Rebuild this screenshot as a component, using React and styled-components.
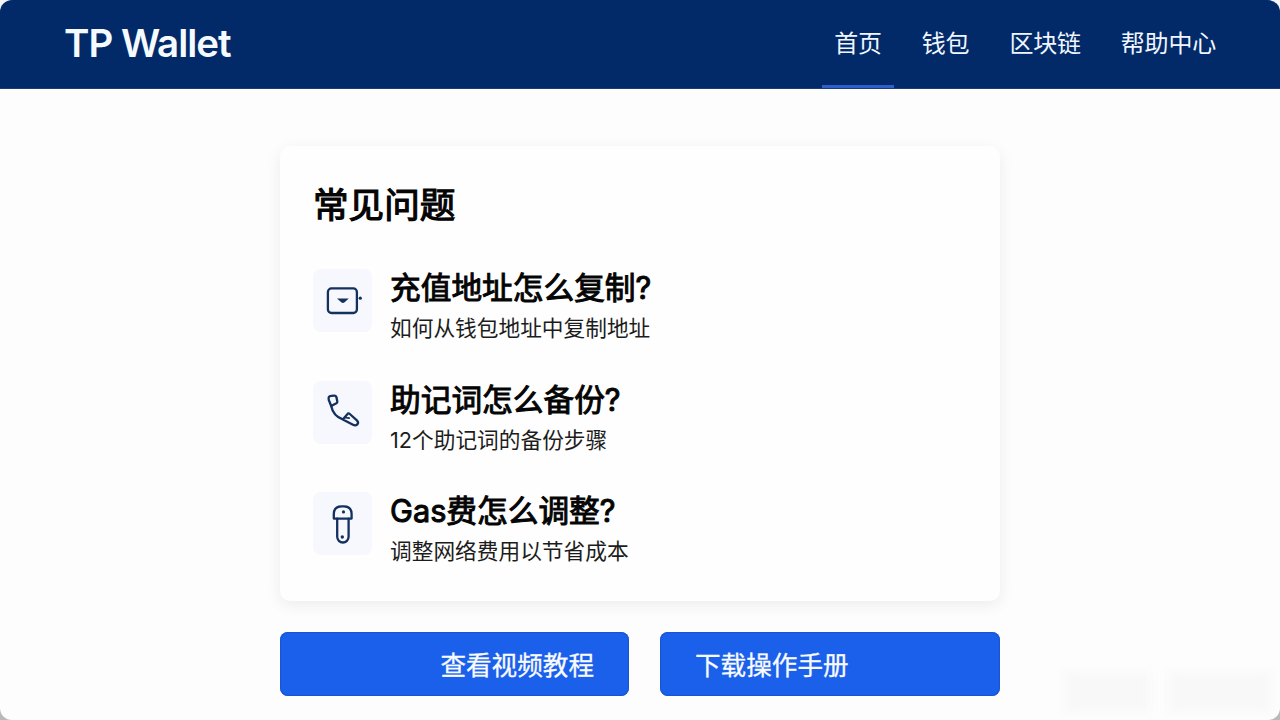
import React from "react";
import styled, { createGlobalStyle } from "styled-components";

const GlobalStyle = createGlobalStyle`
  * {
    box-sizing: border-box;
  }

  body {
    margin: 0;
    background: linear-gradient(#f4f5f8 50%, #b9b9b9 50%);
    font-family: Inter, "Noto Sans CJK SC", sans-serif;
    overflow: hidden;
  }

  h1, h2, h3, p {
    margin: 0;
  }
`;

const Page = styled.div`
  position: relative;
  display: flex;
  flex-direction: column;
  height: 720px;
  overflow: hidden;
  border-radius: 12px;
  background: #fdfdfd;
`;

const Header = styled.header`
  display: flex;
  flex: none;
  justify-content: space-between;
  height: 89px;
  padding: 0 52px 0 64px;
  background: #022a68;
  border-bottom: 1px solid #1b3c74;
`;

const Brand = styled.h1`
  font-size: 38.5px;
  line-height: 87px;
  font-weight: 600;
  letter-spacing: -1px;
  color: #f5faff;
`;

const Nav = styled.nav`
  display: flex;
  gap: 16px;
`;

const NavLink = styled.a`
  height: 88px;
  padding: 0 12px;
  font-size: 24px;
  line-height: 88px;
  letter-spacing: -0.2px;
  color: #f0f6ff;
  border-bottom: 3px solid ${(props) => (props.$active ? "#2c5fcb" : "transparent")};
`;

const Main = styled.main`
  display: flex;
  flex-direction: column;
  width: 720px;
  margin: 57px auto 0;
`;

const Card = styled.section`
  height: 455px;
  padding: 34px 33px 0;
  border-radius: 10px;
  background: #fefefe;
  box-shadow: 0 4px 16px rgba(0, 0, 0, 0.07);
`;

const CardTitle = styled.h2`
  font-size: 35.6px;
  line-height: 52px;
  font-weight: 400;
  -webkit-text-stroke: 1.2px #050505;
  color: #050505;
`;

const FaqList = styled.div`
  display: flex;
  flex-direction: column;
  gap: 31px;
  margin-top: 35px;
`;

const FaqRow = styled.div`
  display: flex;
  gap: 18px;
  height: 80.5px;
`;

const IconBox = styled.div`
  display: flex;
  flex: none;
  width: 59px;
  height: 63px;
  margin-top: 2px;
  border-radius: 8px;
  background: #f7f8fd;
`;

const Question = styled.h3`
  font-size: 30.7px;
  line-height: 41px;
  font-weight: 400;
  -webkit-text-stroke: 1px #050505;
  color: #050505;
`;

const Answer = styled.p`
  font-size: 21.7px;
  line-height: 32px;
  margin-top: 4px;
  color: #1c1c1c;
`;

const Actions = styled.div`
  display: flex;
  gap: 31px;
  margin-top: 31px;
`;

const Button = styled.button`
  width: ${(props) => props.$width};
  height: 64px;
  padding: 3px 35px 0;
  border: 0;
  border-radius: 8px;
  background: #1b60ea;
  box-shadow: inset 0 0 1px 1px #1a55cf;
  font-family: inherit;
  font-size: 25.6px;
  line-height: 61px;
  text-align: ${(props) => props.$align};
  -webkit-text-stroke: 0.3px #f8fbff;
  color: #f8fbff;
`;

/* faint smudges in the bottom right corner */
const Haze = styled.div`
  position: absolute;
  right: 8px;
  bottom: 8px;
  display: flex;
  gap: 18px;
  filter: blur(5px);
`;

const Smudge = styled.span`
  width: ${(props) => props.$width};
  height: 40px;
  background: #f8f8f8;
`;

const Icon = ({ children }) => (
  <svg
    width="59"
    height="63"
    viewBox="0 0 59 63"
    fill="none"
    stroke="#14305f"
    strokeWidth="2.3"
    strokeLinecap="round"
    strokeLinejoin="round"
  >
    {children}
  </svg>
);

const WalletIcon = () => (
  <Icon>
    <rect x="14.9" y="19.4" width="29" height="24.6" rx="3.6" />
    <path d="M24 29.4h11.8l-4.2 3.9q-1.7 1.4-3.4 0z" fill="#14305f" stroke="none" />
    <circle cx="47.3" cy="29.2" r="1.6" fill="#14305f" stroke="none" />
  </Icon>
);

const PhoneIcon = () => (
  <Icon>
    <path d="M18.2 25 15.8 19Q14.8 15 18.3 14.8L21 14.6Q23.2 14.5 23.5 16.6L24.3 20.4Q24.5 21.6 23.4 22.3z" />
    <path d="M18.2 25C19.4 31 23 36 29.8 38.4L34.3 33.2Q35.4 31.8 36.8 33L43.9 39.4Q46 41.4 44.3 43.4 42.6 45.2 40 43.8L29.8 38.4" />
    <path d="M31.8 36.5 36.2 37.2" strokeWidth="1.7" />
  </Icon>
);

const GasIcon = () => (
  <Icon>
    <path d="M20.8 26.6V22Q21 14.3 28.3 14.3h2.8q7.3 0 7.5 7.7v4.6z" />
    <path d="M24.2 26.6v18.2a5.7 5.7 0 0 0 11.4 0V26.6" />
    <circle cx="30.5" cy="19.9" r="1.6" fill="#14305f" stroke="none" />
    <circle cx="29.3" cy="45" r="1.7" fill="#14305f" stroke="none" />
  </Icon>
);

const links = ["首页", "钱包", "区块链", "帮助中心"];

const faqs = [
  { icon: <WalletIcon />, question: "充值地址怎么复制?", answer: "如何从钱包地址中复制地址" },
  { icon: <PhoneIcon />, question: "助记词怎么备份?", answer: "12个助记词的备份步骤" },
  { icon: <GasIcon />, question: "Gas费怎么调整?", answer: "调整网络费用以节省成本" },
];

function FaqItem(props) {
  const { icon, question, answer } = props;
  return (
    <FaqRow>
      <IconBox>{icon}</IconBox>
      <div>
        <Question>{question}</Question>
        <Answer>{answer}</Answer>
      </div>
    </FaqRow>
  );
}

export default function App() {
  return (
    <Page lang="zh-CN">
      <GlobalStyle />
      <Header>
        <Brand>TP Wallet</Brand>
        <Nav>
          {links.map((link, i) => (
            <NavLink key={link} $active={i === 0}>{link}</NavLink>
          ))}
        </Nav>
      </Header>
      <Main>
        <Card>
          <CardTitle>常见问题</CardTitle>
          <FaqList>
            {faqs.map((faq) => (
              <FaqItem key={faq.question} {...faq} />
            ))}
          </FaqList>
        </Card>
        <Actions>
          <Button $width="349px" $align="right">查看视频教程</Button>
          <Button $width="340px" $align="left">下载操作手册</Button>
        </Actions>
      </Main>
      <Haze>
        <Smudge $width="86px" />
        <Smudge $width="104px" />
      </Haze>
    </Page>
  );
}
